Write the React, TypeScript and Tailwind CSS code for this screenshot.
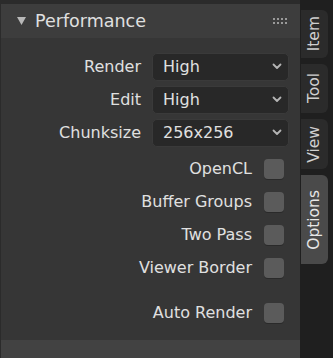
import React from 'react';

const dropdowns = [
  { label: 'Render', value: 'High' },
  { label: 'Edit', value: 'High' },
  { label: 'Chunksize', value: '256x256' },
];

const checks = ['OpenCL', 'Buffer Groups', 'Two Pass', 'Viewer Border'];

const tabs = [
  { name: 'Item', h: 'h-[48px]', active: false },
  { name: 'Tool', h: 'h-[49px]', active: false },
  { name: 'View', h: 'h-[50px]', active: false },
  { name: 'Options', h: 'h-[89px]', active: true },
];

function Chevron() {
  return (
    <svg width="10" height="7" viewBox="0 0 10 7" className="shrink-0">
      <polyline points="1.5,1.5 5,5 8.5,1.5" fill="none" stroke="#b5b5b5" strokeWidth="1.8" strokeLinecap="round" strokeLinejoin="round" />
    </svg>
  );
}

function CheckRow({ label }: { label: string }) {
  return (
    <div className="h-[33px] flex items-center justify-end pr-[16px] gap-[12px]">
      <span>{label}</span>
      <div className="w-[20px] h-[20px] rounded-[4px] bg-[#5b5b5b] shadow-[0_1px_0_#2a2a2a]" />
    </div>
  );
}

export default function App() {
  return (
    <div
      className="w-[333px] h-[358px] flex bg-[#1f1f1f] text-[#e0e0e0] overflow-hidden"
      style={{ fontFamily: '"DejaVu Sans", sans-serif' }}
    >
      {/* Panel */}
      <div className="w-[300px] flex flex-col bg-[#2b2b2b] pt-[4px] pl-[1px]">
        <div className="h-[34px] shrink-0 bg-[#3d3d3d] flex items-center pl-[16px] pr-[13px]">
          <svg width="9" height="8" viewBox="0 0 9 8" className="shrink-0">
            <polygon points="0,0 9,0 4.5,8" fill="#b8b8b8" />
          </svg>
          <span className="ml-[9px] text-[17.5px] flex-1">Performance</span>
          <div className="grid grid-cols-4 gap-x-[2px] gap-y-[2px]">
            {Array.from({ length: 8 }).map((_, i) => (
              <div key={i} className="w-[2px] h-[2px] bg-[#9a9a9a]" />
            ))}
          </div>
        </div>

        <div className="flex-1 bg-[#363636] pt-[12px] text-[16px]">
          {dropdowns.map((d) => (
            <div key={d.label} className="h-[33px] flex items-center pr-[11px]">
              <span className="w-[140px] text-right shrink-0">{d.label}</span>
              <div className="ml-[11px] flex-1 h-[28px] rounded-[5px] bg-[#282828] border border-[#3a3a3a] flex items-center pl-[10px] pr-[6px]">
                <span className="flex-1">{d.value}</span>
                <Chevron />
              </div>
            </div>
          ))}
          <div className="h-[3px]" />
          {checks.map((c) => (
            <CheckRow key={c} label={c} />
          ))}
          <div className="h-[12px]" />
          <CheckRow label="Auto Render" />
        </div>

        <div className="h-[18px] shrink-0 bg-[#424242]" />
      </div>

      {/* Sidebar tabs */}
      <div className="flex-1 flex flex-col pt-[10px] pl-[1px] gap-[6px] text-[15.5px]">
        {tabs.map((t) => (
          <div
            key={t.name}
            className={`${t.h} w-[27px] rounded-r-[6px] flex items-center justify-center ${
              t.active ? 'bg-[#4a4a4a] text-[#e6e6e6]' : 'bg-[#2b2b2b] text-[#cfcfcf]'
            }`}
          >
            <span className="[writing-mode:vertical-rl] rotate-180 leading-none">{t.name}</span>
          </div>
        ))}
      </div>
    </div>
  );
}
